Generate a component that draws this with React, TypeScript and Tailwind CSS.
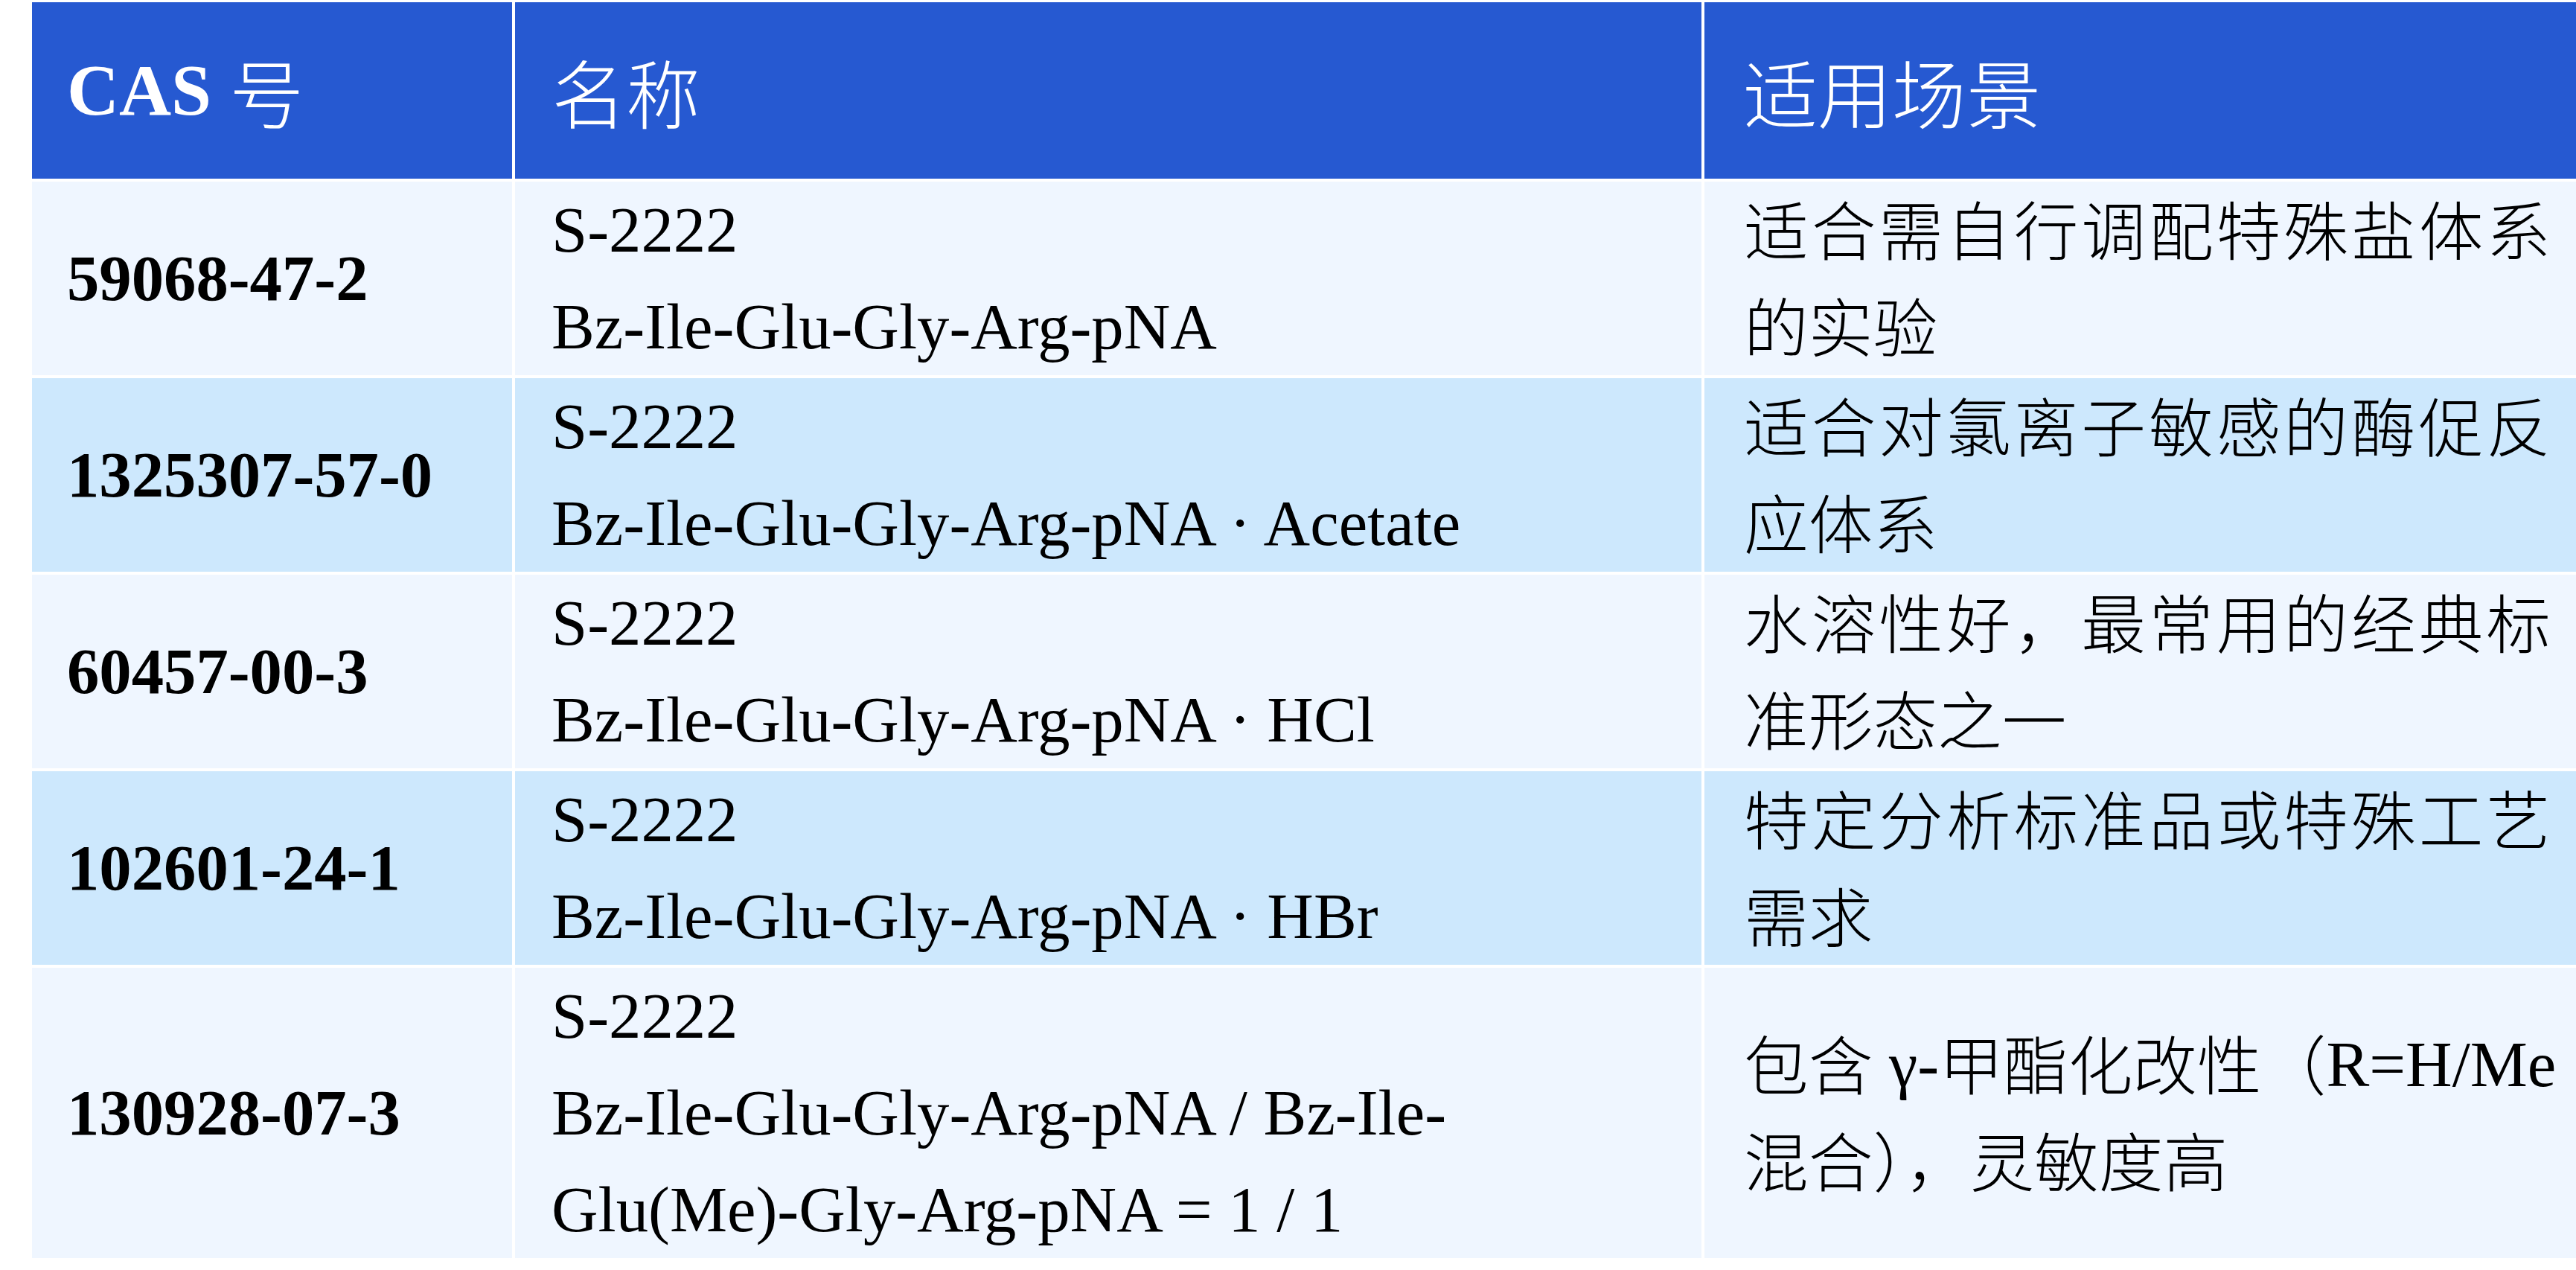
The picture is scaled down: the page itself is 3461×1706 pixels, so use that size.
import React from "react";

const latin = "font-['Liberation_Serif','Noto_Sans_CJK_SC',serif]";

function Zh({ children }: { children: React.ReactNode }) {
  return (
    <span className="font-['Noto_Sans_CJK_SC','Liberation_Serif',sans-serif] leading-none font-light align-[-5px]">
      {children}
    </span>
  );
}

type Row = {
  cas: string;
  name: React.ReactNode[];
  use: React.ReactNode[];
  alt: boolean;
};

const rows: Row[] = [
  {
    cas: "59068-47-2",
    name: ["S-2222", "Bz-Ile-Glu-Gly-Arg-pNA"],
    use: [<Zh>适合需自行调配特殊盐体系</Zh>, <Zh>的实验</Zh>],
    alt: false,
  },
  {
    cas: "1325307-57-0",
    name: ["S-2222", "Bz-Ile-Glu-Gly-Arg-pNA · Acetate"],
    use: [<Zh>适合对氯离子敏感的酶促反</Zh>, <Zh>应体系</Zh>],
    alt: true,
  },
  {
    cas: "60457-00-3",
    name: ["S-2222", "Bz-Ile-Glu-Gly-Arg-pNA · HCl"],
    use: [<Zh>水溶性好，最常用的经典标</Zh>, <Zh>准形态之一</Zh>],
    alt: false,
  },
  {
    cas: "102601-24-1",
    name: ["S-2222", "Bz-Ile-Glu-Gly-Arg-pNA · HBr"],
    use: [<Zh>特定分析标准品或特殊工艺</Zh>, <Zh>需求</Zh>],
    alt: true,
  },
  {
    cas: "130928-07-3",
    name: [
      "S-2222",
      "Bz-Ile-Glu-Gly-Arg-pNA / Bz-Ile-",
      "Glu(Me)-Gly-Arg-pNA = 1 / 1",
    ],
    use: [
      <>
        <Zh>包含</Zh> γ-<Zh>甲酯化改性（</Zh>R=H/Me
      </>,
      <Zh>混合），灵敏度高</Zh>,
    ],
    alt: false,
  },
];

export default function App() {
  return (
    <div className="w-[3461px] h-[1706px] overflow-hidden bg-white pl-[43px] pt-[3px]">
      <div
        className={`grid grid-cols-[645px_1594px_1187px] gap-[4px] text-[86.7px] leading-[130px] text-black ${latin}`}
      >
        {/* header */}
        <div className="bg-[#2659d1] h-[237px] flex items-center px-[47px] text-white text-[97px]">
          <span className="font-bold">CAS</span>
          <span>&nbsp;</span>
          <span className="font-['Noto_Sans_CJK_SC',sans-serif] font-light text-[100px] leading-none">号</span>
        </div>
        <div className="bg-[#2659d1] h-[237px] flex items-center px-[49px] text-white">
          <span className="font-['Noto_Sans_CJK_SC',sans-serif] font-light text-[100px] leading-none">名称</span>
        </div>
        <div className="bg-[#2659d1] h-[237px] flex items-center pl-[52px] pr-[50px] text-white">
          <span className="font-['Noto_Sans_CJK_SC',sans-serif] font-light text-[100px] leading-none">适用场景</span>
        </div>

        {rows.map((r, i) => {
          const bg = r.alt ? "bg-[#cde8fd]" : "bg-[#eff6ff]";
          return (
            <React.Fragment key={i}>
              <div className={`${bg} flex items-center px-[47px] font-bold`}>
                <div className="h-[130px] whitespace-nowrap">{r.cas}</div>
              </div>
              <div className={`${bg} flex flex-col justify-center px-[49px]`}>
                {r.name.map((l, j) => (
                  <div key={j} className="h-[130px] whitespace-nowrap">
                    {l}
                  </div>
                ))}
              </div>
              <div className={`${bg} flex flex-col justify-center pl-[53px] pr-[50px]`}>
                {r.use.map((l, j) => (
                  <div
                    key={j}
                    className={
                      j < r.use.length - 1
                        ? "h-[130px] whitespace-nowrap text-justify [text-align-last:justify]"
                        : "h-[130px] whitespace-nowrap"
                    }
                  >
                    {l}
                  </div>
                ))}
              </div>
            </React.Fragment>
          );
        })}
      </div>
    </div>
  );
}
